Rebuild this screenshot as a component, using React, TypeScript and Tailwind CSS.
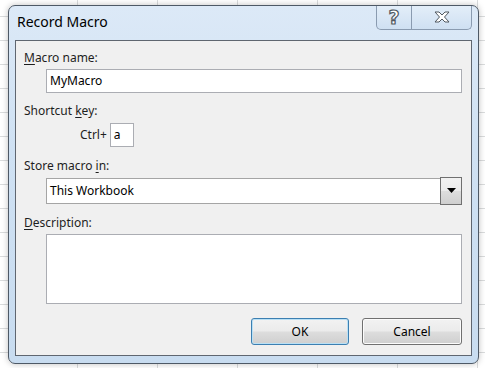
import React from "react";

function Underlined({ children }: { children: React.ReactNode }) {
  return <span className="underline underline-offset-[2px] decoration-1">{children}</span>;
}

function TitleButtons() {
  return (
    <div className="absolute top-0 right-[6px] flex h-[24px]">
      {/* Help */}
      <div className="w-[36px] h-full flex items-center justify-center border border-t-0 border-[#8a9bb0] rounded-bl-[5px] bg-[linear-gradient(to_bottom,#e3eef9,#cfe0f2)]">
        <span className="font-['DejaVu_Sans',sans-serif] font-bold text-[19px] leading-none text-white [-webkit-text-stroke:1.2px_#505860] -mt-[1px]">
          ?
        </span>
      </div>
      {/* Close */}
      <div className="w-[60px] h-full flex items-center justify-center border border-t-0 border-l-0 border-[#8a9bb0] rounded-br-[5px] bg-[linear-gradient(to_bottom,#e3eef9,#cfe0f2)]">
        <svg width="16" height="12" viewBox="0 0 16 12" className="-mt-[2px]">
          <path
            d="M1 1 H5 L8 4 L11 1 H15 L10.5 6 L15 11 H11 L8 8 L5 11 H1 L5.5 6 Z"
            fill="#ffffff"
            stroke="#505860"
            strokeWidth="1"
            strokeLinejoin="round"
          />
        </svg>
      </div>
    </div>
  );
}

function WinButton({ label, primary }: { label: string; primary?: boolean }) {
  return (
    <div
      className={
        primary
          ? "w-[98px] h-[27px] rounded-[3px] border border-[#3c7fb1] shadow-[inset_0_0_0_1px_#b9e0f5] bg-[linear-gradient(to_bottom,#f2f2f2_0%,#ebebeb_48%,#dddddd_52%,#cfcfcf_100%)] flex items-center justify-center text-[12px] text-black"
          : "w-[100px] h-[27px] rounded-[3px] border border-[#707070] shadow-[inset_0_0_0_1px_#fcfcfc] bg-[linear-gradient(to_bottom,#f2f2f2_0%,#ebebeb_48%,#dddddd_52%,#cfcfcf_100%)] flex items-center justify-center text-[12px] text-black"
      }
    >
      {label}
    </div>
  );
}

export default function App() {
  return (
    <div className="w-[485px] h-[368px] overflow-hidden bg-white bg-[linear-gradient(to_right,#dadcdd_1px,transparent_1px),linear-gradient(to_bottom,#dadcdd_1px,transparent_1px)] bg-[size:80px_24px] bg-[position:77px_16px] pt-[5px] pl-[8px] font-['Noto_Sans',sans-serif]">
      {/* Window */}
      <div className="relative w-[471px] h-[359px] rounded-[7px] border border-[#4e5966] bg-[linear-gradient(to_bottom,#dce9f7,#cfe1f3_40%,#c8dcf0)] shadow-[0_0_6px_rgba(0,0,0,0.25)] px-[6px] pb-[7px] flex flex-col">
        {/* Title bar */}
        <div className="h-[34px] shrink-0 flex items-center pl-[2px] pb-[3px]">
          <span className="text-[14px] text-black leading-none">Record Macro</span>
        </div>
        <TitleButtons />

        {/* Client area */}
        <div className="flex-1 border border-[#5f6670] bg-[#f0f0f0] pl-[8px] pr-[9px] flex flex-col text-[12px] text-[#1e1e1e]">
          <div className="mt-[9px] leading-[16px]">
            <Underlined>M</Underlined>acro name:
          </div>
          <div className="mt-[3px] ml-[22px] h-[24px] border border-[#abadb3] bg-white flex items-center px-[3px] text-black">
            MyMacro
          </div>

          <div className="mt-[10px] leading-[16px]">
            Shortcut <Underlined>k</Underlined>ey:
          </div>
          <div className="mt-[4px] ml-[56px] flex items-center gap-[3px]">
            <span>Ctrl+</span>
            <div className="w-[24px] h-[24px] border border-[#abadb3] bg-white flex items-center px-[3px] text-black">
              a
            </div>
          </div>

          <div className="mt-[11px] leading-[16px]">
            Store macro <Underlined>i</Underlined>n:
          </div>
          <div className="mt-[4px] ml-[22px] h-[26px] border border-[#a5a5a5] bg-white flex items-center text-black">
            <span className="flex-1 px-[3px]">This Workbook</span>
            <div className="w-[22px] self-stretch -my-[2px] -mr-px border border-[#707070] bg-[linear-gradient(to_bottom,#f2f2f2_0%,#ebebeb_48%,#dddddd_52%,#cfcfcf_100%)] flex items-center justify-center">
              <svg width="9" height="6" viewBox="0 0 9 6">
                <path d="M0 0 H9 L4.5 5 Z" fill="#000000" />
              </svg>
            </div>
          </div>

          <div className="mt-[11px] leading-[16px]">
            <Underlined>D</Underlined>escription:
          </div>
          <div className="mt-[3px] ml-[22px] h-[70px] border border-[#abadb3] bg-white" />

          <div className="mt-[14px] flex justify-end gap-[13px]">
            <WinButton label="OK" primary />
            <WinButton label="Cancel" />
          </div>
        </div>
      </div>
    </div>
  );
}
